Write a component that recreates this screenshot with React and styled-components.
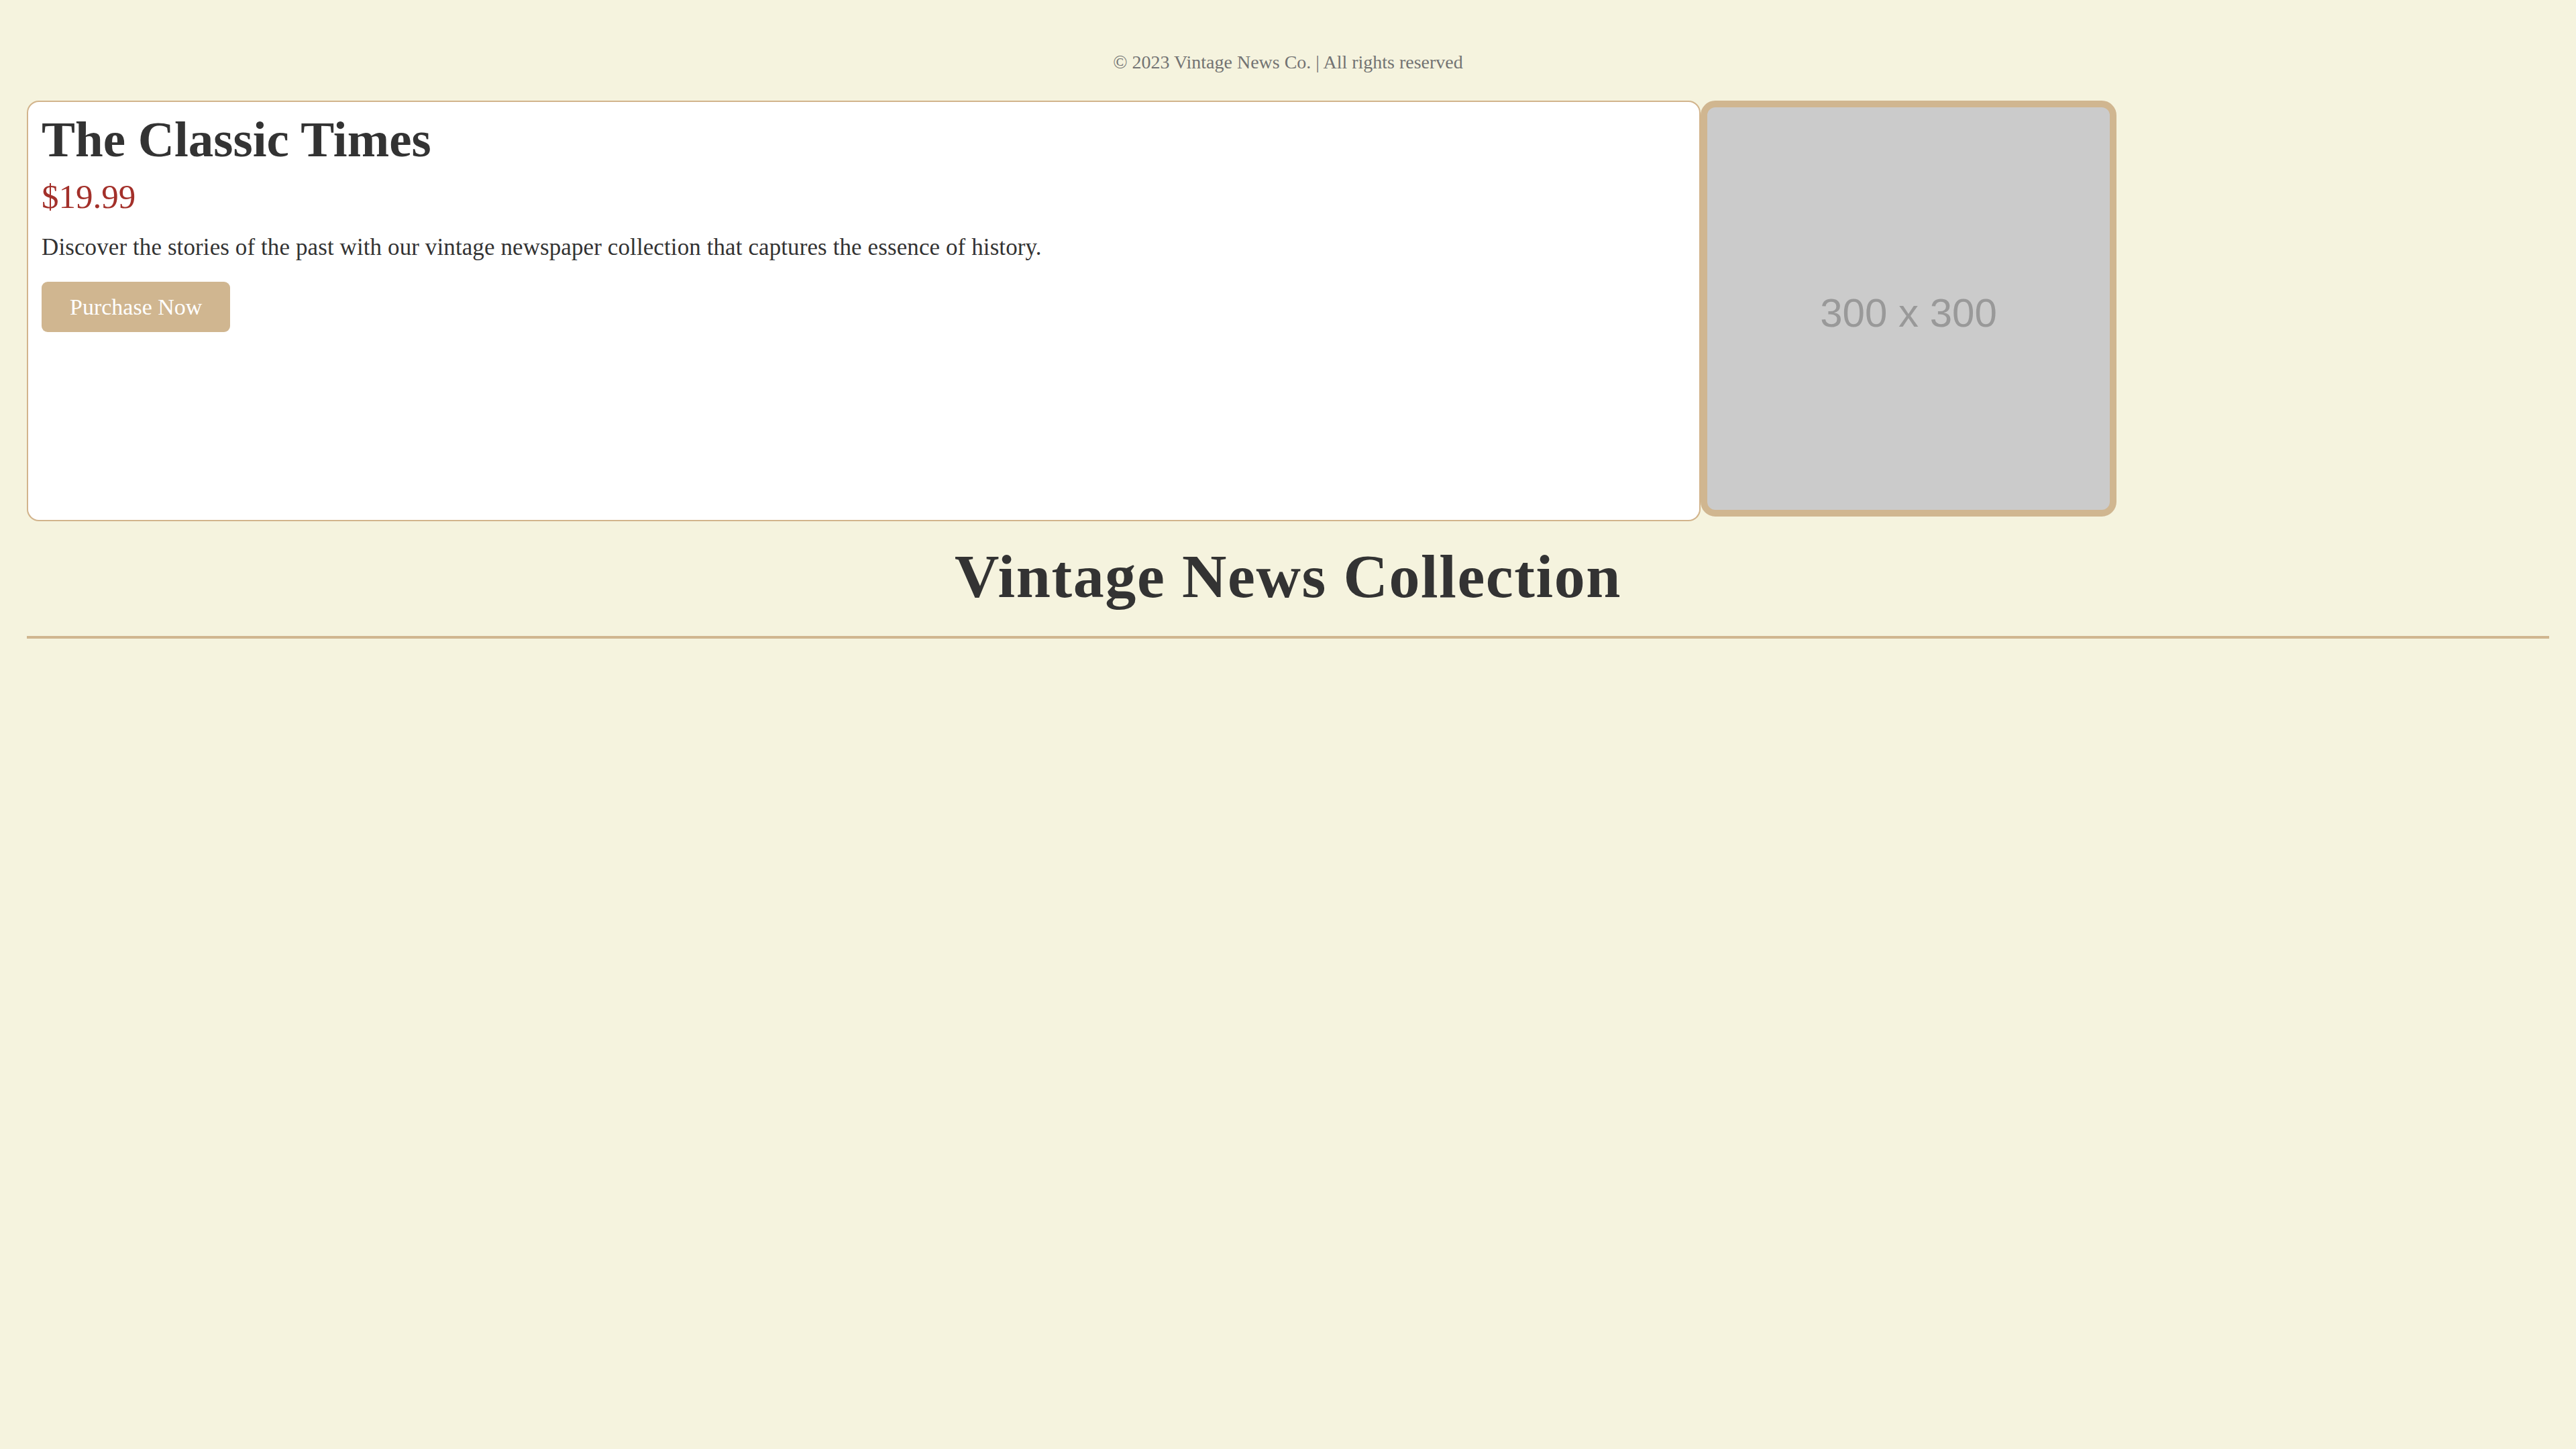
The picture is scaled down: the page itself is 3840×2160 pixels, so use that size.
import React from "react";
import styled, { createGlobalStyle } from "styled-components";

const GlobalStyle = createGlobalStyle`
  html, body {
    margin: 0;
    padding: 0;
    background: #f5f3de;
  }
  body {
    font-family: "Liberation Serif", "DejaVu Serif", serif;
    color: #333;
  }
`;

const Page = styled.div`
  padding: 0 40px;
  min-height: 2160px;
  box-sizing: border-box;
`;

const Footer = styled.footer`
  padding-top: 76px;
  margin-bottom: 40px;
  text-align: center;
  font-size: 28px;
  line-height: 34px;
  color: #737373;
`;

const ProductRow = styled.section`
  display: flex;
  align-items: flex-start;
`;

const Card = styled.article`
  flex: 0 0 2495px;
  height: 627px;
  box-sizing: border-box;
  padding: 18px 20px 20px;
  background: #fff;
  border: 2px solid #d2b48c;
  border-radius: 18px;
`;

const Title = styled.h2`
  margin: 0;
  font-size: 75px;
  line-height: 1;
  font-weight: 700;
  color: #333;
`;

const Price = styled.p`
  margin: 23px 0 0;
  font-size: 51px;
  line-height: 1;
  color: #a3302a;
`;

const Description = styled.p`
  margin: 32px 0 0;
  font-size: 35px;
  line-height: 1;
  letter-spacing: 0.1px;
  color: #333;
`;

const BuyButton = styled.button`
  margin-top: 34px;
  padding: 20px 42px;
  font-family: inherit;
  font-size: 34px;
  line-height: 35px;
  color: #fff;
  background: #d0b690;
  border: none;
  border-radius: 9px;
  cursor: pointer;
`;

const ImageFrame = styled.div`
  flex: 0 0 auto;
  width: 620px;
  height: 620px;
  box-sizing: border-box;
  border: 10px solid #d0b690;
  border-radius: 22px;
  background: #cbcbcb;
  display: flex;
  align-items: center;
  justify-content: center;
`;

const PlaceholderText = styled.span`
  font-family: "Liberation Sans", Arial, sans-serif;
  font-size: 60px;
  color: #999;
  margin-top: 12px;
`;

const Heading = styled.h1`
  margin: 36px 0 0;
  padding-bottom: 43px;
  border-bottom: 4px solid #d0b690;
  text-align: center;
  font-size: 92px;
  line-height: 1;
  letter-spacing: 1.6px;
  font-weight: 700;
  color: #333;
`;

export default function App() {
  return (
    <>
      <GlobalStyle />
      <Page>
        <Footer>© 2023 Vintage News Co. | All rights reserved</Footer>
        <ProductRow>
          <Card>
            <Title>The Classic Times</Title>
            <Price>$19.99</Price>
            <Description>
              Discover the stories of the past with our vintage newspaper
              collection that captures the essence of history.
            </Description>
            <BuyButton>Purchase Now</BuyButton>
          </Card>
          <ImageFrame>
            <PlaceholderText>300 x 300</PlaceholderText>
          </ImageFrame>
        </ProductRow>
        <Heading>Vintage News Collection</Heading>
      </Page>
    </>
  );
}
